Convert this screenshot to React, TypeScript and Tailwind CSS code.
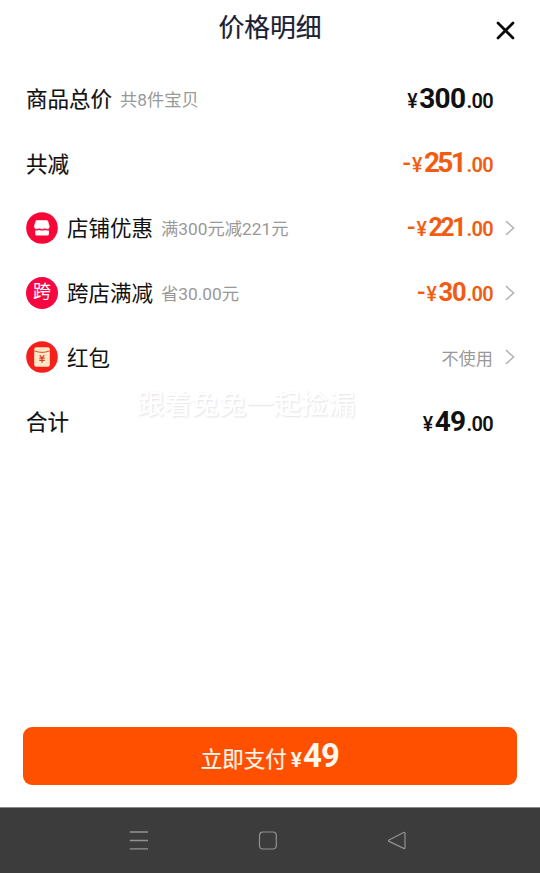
import React from "react";

type PriceProps = { value: string; minus?: boolean; small?: boolean; orange?: boolean };

function Price({ value, minus, small, orange }: PriceProps) {
  const narrow = value.endsWith("1");
  const size = small
    ? narrow
      ? "text-[25px] tracking-[-2.5px] mr-[1.5px]"
      : "text-[25.5px] tracking-[-1.1px]"
    : narrow
      ? "text-[28px] tracking-[-2.7px] mr-[1.5px]"
      : "text-[28px] tracking-[-0.6px]";
  return (
    <div className={`flex items-baseline leading-none ${orange ? "text-[#f25c12]" : "text-[#111111]"}`}>
      {minus && <span className="mr-px text-[25px] font-medium leading-none">-</span>}
      <span className="w-[11px] text-[19.5px] font-medium leading-none">¥</span>
      <span className={`ml-px font-bold leading-none ${size}`}>{value}</span>
      <span className="ml-px text-[20px] font-semibold leading-none tracking-[-0.7px]">.00</span>
    </div>
  );
}

function Chevron() {
  return (
    <svg className="ml-[12px] h-[16px] w-[10px]" viewBox="0 0 10 16" fill="none" stroke="#b4b4b4" strokeWidth="1.6">
      <path d="M1 1.2L8.6 8L1 14.8" />
    </svg>
  );
}

function ShopIcon() {
  return (
    <svg className="mr-[9px] size-[32px]" viewBox="0 0 32 32">
      <circle cx="16" cy="16" r="15.8" fill="#f80638" />
      <path d="M10.800 8.500h9.900q.9 0 1.200 1l1.400 4.700q.1 2.600-2 2.600q-1.300 0-2.500-.8q-1.300.8-2.800.8t-2.800-.8q-1.200.8-2.500.8q-2.300 0-2.300-2.600l1.300-4.700q.3-1 1.100-1z" fill="#fff" stroke="#fff" strokeWidth=".6" strokeLinejoin="round" />
      <path d="M9.200 18.400q2 .4 3.800-.4q3 1 6 0q1.900.8 3.900.4v3.700q0 1.500-1.500 1.500H10.700q-1.500 0-1.500-1.500z" fill="#fff" />
    </svg>
  );
}

function CrossShopIcon() {
  return (
    <span className="mr-[9px] flex size-[32px] items-center justify-center rounded-full bg-[#f80642] text-[18px] leading-none text-white">
      <span className="-mt-px">跨</span>
    </span>
  );
}

function PacketIcon() {
  return (
    <svg className="mr-[9px] size-[32px]" viewBox="0 0 32 32">
      <circle cx="16" cy="16" r="15.8" fill="#f5201b" />
      <rect x="8.200" y="6.200" width="15.600" height="19.500" rx="2" fill="#ffe8c4" />
      <path d="M8.200 9.800q7.800 3.200 15.600 0" fill="none" stroke="#f0442d" strokeWidth="1" />
      <path d="M13.700 14l2.300 3l2.300-3M16 17v4.800M13.300 17.200h5.400M13.300 19.400h5.400" fill="none" stroke="#d9362b" strokeWidth="1.200" />
    </svg>
  );
}

type RowProps = {
  label: string;
  note?: string;
  icon?: React.ReactNode;
  children: React.ReactNode;
  link?: boolean;
};

function Row({ label, note, icon, children, link }: RowProps) {
  return (
    <div className="flex h-[64.7px] items-center justify-between">
      <div className="flex items-center">
        {icon}
        <span
          className={`pt-[3px] text-[21.5px] leading-[32px] text-[#111111] ${icon ? "" : "[-webkit-text-stroke:0.2px_#111111]"}`}
        >
          {label}
        </span>
        {note && <span className="ml-[8px] pt-[2px] text-[17.3px] leading-[32px] text-[#999999]">{note}</span>}
      </div>
      <div className={`flex items-center ${link ? "" : "pr-[22px]"}`}>
        {children}
        {link && <Chevron />}
      </div>
    </div>
  );
}

export default function App() {
  return (
    <div className="flex h-[873px] w-[540px] flex-col overflow-hidden bg-white font-['Roboto','Noto_Sans_CJK_SC',sans-serif]">
      <header className="grid h-[66px] shrink-0 grid-cols-[1fr_auto_1fr] items-start">
        <span />
        <h1 className="pt-[8px] text-[25.8px] leading-[40px] text-[#1a2033] [-webkit-text-stroke:0.2px_#1a2033]">价格明细</h1>
        <button aria-label="关闭" className="mr-[25px] mt-[21px] justify-self-end">
          <svg className="size-[19px]" viewBox="0 0 19 19" fill="none" stroke="#0a0a0a" strokeWidth="2.700" strokeLinecap="round">
            <path d="M2 2L17 17M17 2L2 17" />
          </svg>
        </button>
      </header>

      <main className="relative flex-1 pl-[26px] pr-[25px] pt-[0.2px]">
        <Row label="商品总价" note="共8件宝贝">
          <Price value="300" />
        </Row>
        <Row label="共减">
          <Price value="251" minus orange />
        </Row>
        <Row label="店铺优惠" note="满300元减221元" icon={<ShopIcon />} link>
          <Price value="221" minus small orange />
        </Row>
        <Row label="跨店满减" note="省30.00元" icon={<CrossShopIcon />} link>
          <Price value="30" minus small orange />
        </Row>
        <Row label="红包" icon={<PacketIcon />} link>
          <span className="pt-[3px] text-[17.2px] leading-[32px] text-[#999999]">不使用</span>
        </Row>
        <Row label="合计">
          <Price value="49" />
        </Row>
        <div className="pointer-events-none absolute left-[137px] top-[319px] whitespace-nowrap text-[27.3px] font-medium leading-[40px] text-white [text-shadow:1px_1px_2px_#e2e2e6]">
          跟着兔兔一起捡漏
        </div>
      </main>

      <div className="h-[80px] shrink-0 px-[23px]">
        <button className="flex h-[58px] w-full items-baseline justify-center rounded-[9px] bg-[#ff5000] leading-[58px] text-[#fff6ee]">
          <span className="text-[21.5px] [-webkit-text-stroke:0.2px_#fff6ee]">立即支付</span>
          <span className="ml-[4px] text-[21px] font-semibold">¥</span>
          <span className="ml-px text-[33px] font-bold tracking-[-0.8px]">49</span>
        </button>
      </div>

      <nav className="flex h-[66px] shrink-0 items-center justify-between border-t border-[#8a8a8a] bg-[#3c3c3c] px-[129px]">
        <svg className="size-[20px]" viewBox="0 0 20 20" fill="none" stroke="#929292" strokeWidth="1.300">
          <path d="M.8 1H19M.8 9.500H19M.8 17.800H19" />
        </svg>
        <svg className="size-[20px]" viewBox="0 0 20 20" fill="none" stroke="#929292" strokeWidth="1.200">
          <rect x="1.500" y="1" width="16.800" height="17" rx="3.500" />
        </svg>
        <svg className="mr-[4px] size-[20px]" viewBox="0 0 20 20" fill="none" stroke="#929292" strokeWidth="1.200" strokeLinejoin="round">
          <path d="M2 9L16.700 1.500Q18 1 18 2.300V16.500Q18 18 16.700 17.400L2 10.400Q1 9.700 2 9Z" />
        </svg>
      </nav>
    </div>
  );
}
